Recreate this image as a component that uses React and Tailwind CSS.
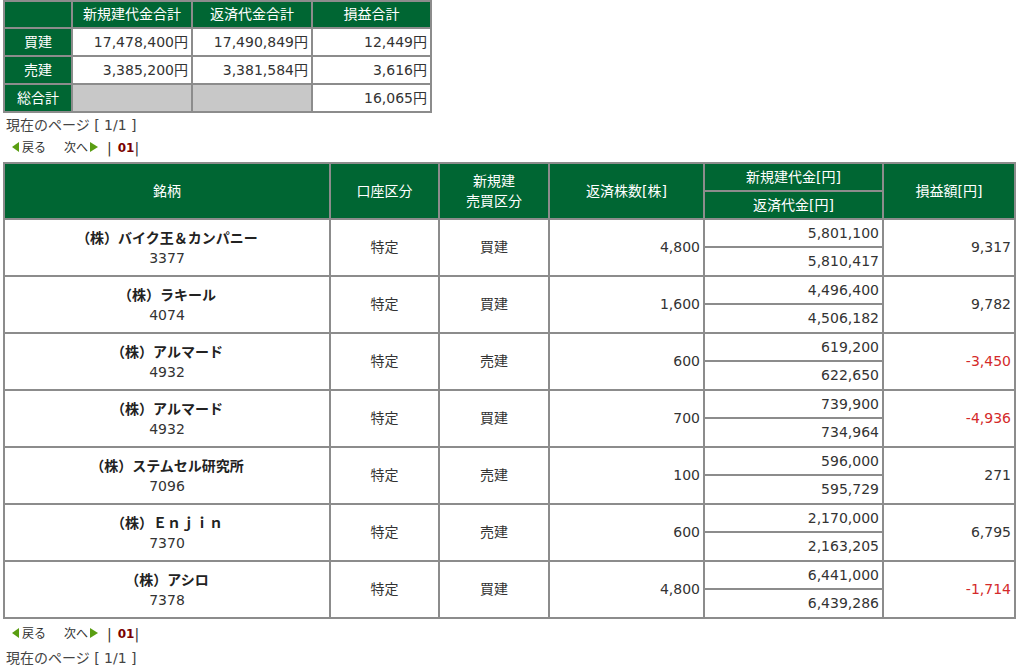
import React from "react";

const font = { fontFamily: '"DejaVu Sans", "Noto Sans CJK JP", sans-serif' };

const rows = [
  { name: "（株）バイク王＆カンパニー", code: "3377", type: "買建", qty: "4,800", a: "5,801,100", b: "5,810,417", pnl: "9,317", neg: false },
  { name: "（株）ラキール", code: "4074", type: "買建", qty: "1,600", a: "4,496,400", b: "4,506,182", pnl: "9,782", neg: false },
  { name: "（株）アルマード", code: "4932", type: "売建", qty: "600", a: "619,200", b: "622,650", pnl: "-3,450", neg: true },
  { name: "（株）アルマード", code: "4932", type: "買建", qty: "700", a: "739,900", b: "734,964", pnl: "-4,936", neg: true },
  { name: "（株）ステムセル研究所", code: "7096", type: "売建", qty: "100", a: "596,000", b: "595,729", pnl: "271", neg: false },
  { name: "（株）Ｅｎｊｉｎ", code: "7370", type: "売建", qty: "600", a: "2,170,000", b: "2,163,205", pnl: "6,795", neg: false },
  { name: "（株）アシロ", code: "7378", type: "買建", qty: "4,800", a: "6,441,000", b: "6,439,286", pnl: "-1,714", neg: true },
];

function Nav() {
  return (
    <div className="flex items-center h-[22px] pl-[9px] text-[12px] text-[#333]">
      <svg width="8" height="10" viewBox="0 0 8 10" className="mr-[2px] mb-[3px]">
        <polygon points="7,0 7,10 0,5" fill="#5a9e12" />
      </svg>
      <span>戻る</span>
      <span className="ml-[18px]">次へ</span>
      <svg width="8" height="10" viewBox="0 0 8 10" className="ml-[2px] mb-[3px]">
        <polygon points="0,0 0,10 8,5" fill="#5a9e12" />
      </svg>
      <span className="ml-[9px] text-[14px]">|</span>
      <span className="ml-[6px] font-bold text-[#7a0000] text-[12px]">01</span>
      <span className="text-[14px]">|</span>
    </div>
  );
}

const th = "bg-[#006633] text-white font-normal border-2 border-[#8c8c8c] text-center";
const td = "border-2 border-[#8c8c8c] bg-white";

export default function App() {
  return (
    <div className="bg-white w-[1024px] h-[671px] overflow-hidden text-[14px] text-[#333] pl-[3px]" style={font}>
      <table className="border-collapse table-fixed w-[427px]">
        <colgroup>
          <col className="w-[68px]" />
          <col className="w-[120px]" />
          <col className="w-[120px]" />
          <col className="w-[119px]" />
        </colgroup>
        <tbody>
          <tr className="h-[27px]">
            <th className={th}></th>
            <th className={th}>新規建代金合計</th>
            <th className={th}>返済代金合計</th>
            <th className={th}>損益合計</th>
          </tr>
          <tr className="h-[28px]">
            <th className={th}>買建</th>
            <td className={td + " text-right pr-[3px]"}>17,478,400円</td>
            <td className={td + " text-right pr-[3px]"}>17,490,849円</td>
            <td className={td + " text-right pr-[3px]"}>12,449円</td>
          </tr>
          <tr className="h-[28px]">
            <th className={th}>売建</th>
            <td className={td + " text-right pr-[3px]"}>3,385,200円</td>
            <td className={td + " text-right pr-[3px]"}>3,381,584円</td>
            <td className={td + " text-right pr-[3px]"}>3,616円</td>
          </tr>
          <tr className="h-[28px]">
            <th className={th}>総合計</th>
            <td className="border-2 border-[#8c8c8c] bg-[#c8c8c8]"></td>
            <td className="border-2 border-[#8c8c8c] bg-[#c8c8c8]"></td>
            <td className={td + " text-right pr-[3px]"}>16,065円</td>
          </tr>
        </tbody>
      </table>
      <div className="h-[24px] flex items-center pl-[3px] text-[14px] text-[#444]">現在のページ [ 1/1 ]</div>
      <Nav />
      <div className="h-[3px]"></div>
      <table className="border-collapse table-fixed w-[1011px]">
        <colgroup>
          <col className="w-[326px]" />
          <col className="w-[109px]" />
          <col className="w-[110px]" />
          <col className="w-[155px]" />
          <col className="w-[179px]" />
          <col className="w-[132px]" />
        </colgroup>
        <tbody>
          <tr className="h-[28px]">
            <th rowSpan={2} className={th}>銘柄</th>
            <th rowSpan={2} className={th}>口座区分</th>
            <th rowSpan={2} className={th + " leading-[20px]"}>新規建<br />売買区分</th>
            <th rowSpan={2} className={th}>返済株数[株]</th>
            <th className={th}>新規建代金[円]</th>
            <th rowSpan={2} className={th}>損益額[円]</th>
          </tr>
          <tr className="h-[28px]">
            <th className={th}>返済代金[円]</th>
          </tr>
          {rows.map((r, i) => (
            <React.Fragment key={i}>
              <tr className="h-[28px]">
                <td rowSpan={2} className={td + " text-center leading-[20px]"}>
                  <div className="font-bold text-[#222]">{r.name}</div>
                  <div>{r.code}</div>
                </td>
                <td rowSpan={2} className={td + " text-center"}>特定</td>
                <td rowSpan={2} className={td + " text-center"}>{r.type}</td>
                <td rowSpan={2} className={td + " text-right pr-[3px]"}>{r.qty}</td>
                <td className={td + " text-right pr-[3px]"}>{r.a}</td>
                <td rowSpan={2} className={td + " text-right pr-[3px] " + (r.neg ? "text-[#d42a2a]" : "")}>{r.pnl}</td>
              </tr>
              <tr className="h-[29px]">
                <td className={td + " text-right pr-[3px]"}>{r.b}</td>
              </tr>
            </React.Fragment>
          ))}
        </tbody>
      </table>
      <div className="h-[4px]"></div>
      <Nav />
      <div className="h-[26px] flex items-center pl-[3px] text-[14px] text-[#444]">現在のページ [ 1/1 ]</div>
    </div>
  );
}
